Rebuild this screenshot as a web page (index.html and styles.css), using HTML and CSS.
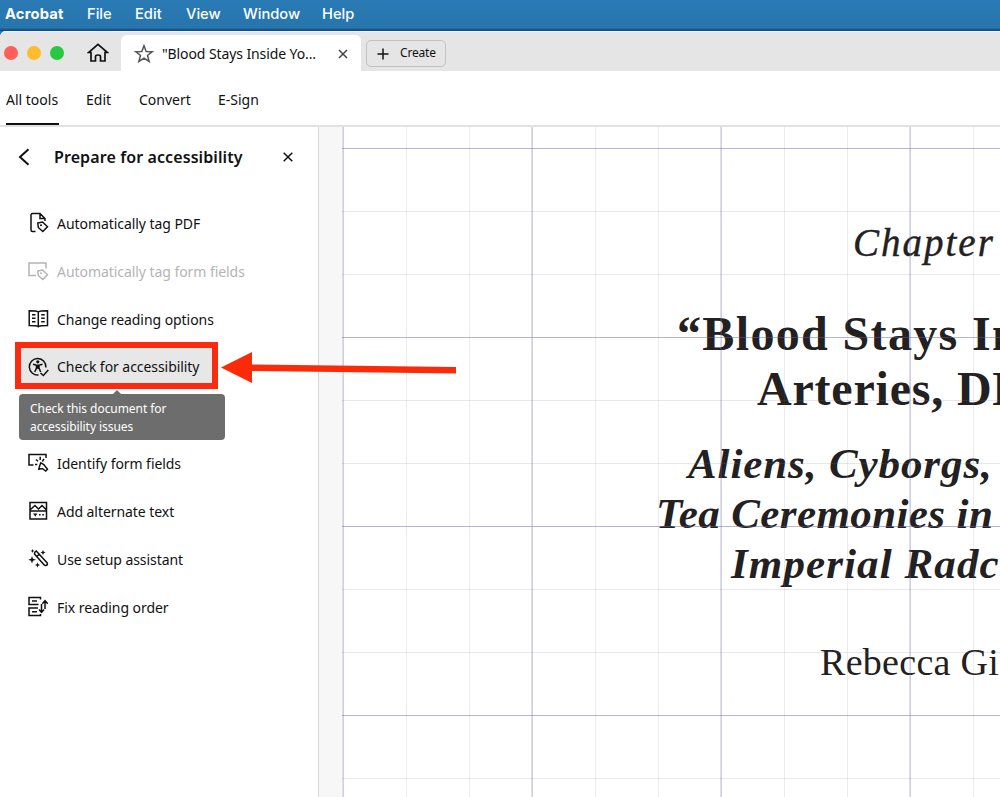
FILE: index.html
```html
<!DOCTYPE html>
<html lang="en">
<head>
  <meta charset="UTF-8">
  <title>Acrobat</title>
  <link rel="stylesheet" href="styles.css">
</head>
<body>

  <nav class="menubar">
    <b class="m-app">Acrobat</b>
    <span class="m-file">File</span>
    <span class="m-edit">Edit</span>
    <span class="m-view">View</span>
    <span class="m-window">Window</span>
    <span class="m-help">Help</span>
  </nav>

  <div class="window">
    <header class="tabbar">
      <div class="lights"><i class="red"></i><i class="yellow"></i><i class="green"></i></div>
      <svg class="home" width="22" height="20" viewBox="0 0 22 20"><path d="M4 9.500H1.500L11 1.300 20.500 9.500H18V18H13.500V13.500Q13.500 12 11 12T8.500 13.500V18H4Z"/></svg>
      <div class="tab">
        <svg class="star" width="20" height="20" viewBox="0 0 20 20"><path d="M10 1.700 12.200 7.400 18.300 7.700 13.500 11.500 15.200 17.500 10 14.100 4.800 17.500 6.500 11.500 1.700 7.700 7.800 7.400Z"/></svg>
        <span class="tab-title">"Blood Stays Inside Yo...</span>
        <svg class="tab-close" width="10" height="10" viewBox="0 0 10 10"><path d="M1 1l8 8M9 1 1 9"/></svg>
      </div>
      <button class="create">
        <svg width="12" height="12" viewBox="0 0 12 12"><path d="M6 .5v11M.5 6h11"/></svg>
        <span>Create</span>
      </button>
    </header>

    <div class="toolbar">
      <span class="t-all active">All tools</span>
      <span class="t-edit">Edit</span>
      <span class="t-convert">Convert</span>
      <span class="t-sign">E-Sign</span>
    </div>

    <div class="main">
      <aside class="panel">
        <div class="panel-head">
          <svg width="12" height="18" viewBox="0 0 12 18"><path d="M10.500 1.300 2 9l8.500 7.700"/></svg>
          <h1>Prepare for accessibility</h1>
          <svg class="panel-close" width="10" height="10" viewBox="0 0 10 10"><path d="M.7.7l8.600 8.600M9.300.7.7 9.300"/></svg>
        </div>

        <ul class="tools">
          <li>
            <svg width="22" height="22" viewBox="0 0 22 22"><path d="M7.500 19.500H4.500a1.500 1.500 0 0 1-1.500-1.500V3a1.500 1.500 0 0 1 1.500-1.500H12L17 6.500V9M12 1.500V6.500H17M9.800 11 14.500 10 19.500 14.800 14.800 19.500 10.300 15.500Z"/><circle class="dot" cx="13" cy="13.300" r="1"/></svg>
            <span>Automatically tag PDF</span>
          </li>
          <li class="disabled">
            <svg width="22" height="22" viewBox="0 0 22 22"><path d="M8 15.500H1V3H18V8.500M9.800 11 14.500 10 19.500 14.800 14.800 19.500 10.300 15.500Z"/><circle class="dot" cx="13" cy="13.300" r="1"/></svg>
            <span>Automatically tag form fields</span>
          </li>
          <li>
            <svg width="22" height="22" viewBox="0 0 22 22"><path d="M10.300 4C9 3 7 2.800 1.200 2.800V17.500C7 17.500 9 17.600 10.300 18.800 11.600 17.600 13.600 17.500 19.500 17.500V2.800C13.600 2.800 11.600 3 10.300 4ZM10.300 4V18.500M4 6.700H7.500M4 10.200H7.500M4 13.700H7.500M13.200 6.700H16.700M13.200 10.200H16.700M13.200 13.700H16.700"/></svg>
            <span>Change reading options</span>
          </li>
          <li class="selected">
            <svg width="22" height="22" viewBox="0 0 22 22"><path d="M10.500 19A8.300 8.300 0 1 1 17.900 11.500M12.500 17l2.800 2.500 5-5.500M5 8.300 8.500 9.300H11L14.500 8.300M8.500 9.300V12L6.700 16M11 9.300V12L12.700 16M8.500 12H11"/><circle class="dot" cx="9.800" cy="5.800" r="1.600"/><path class="dot" d="M8.500 9H11V12.500H8.500Z"/></svg>
            <span>Check for accessibility</span>
            <div class="tooltip">Check this document for<br>accessibility issues</div>
          </li>
          <li class="blank"></li>
          <li>
            <svg width="22" height="22" viewBox="0 0 22 22"><path d="M5.500 13H1V2.500H18V6M8 7.500 10 9.200M12.200 4.800V8M7 12.500H9.300M16 6.800 14.300 9.500M12.800 10.800 15.800 12.500 19.500 17.200 17.700 19 14.300 16.500 10.800 17.300Q11.500 14 12.800 10.800Z"/></svg>
            <span>Identify form fields</span>
          </li>
          <li>
            <svg width="22" height="22" viewBox="0 0 22 22"><path d="M2 2.500H18.500V19H2ZM2 11H18.500M2.500 9.500 7 5.500 10.500 9 14 5.500 18 9.500"/><path class="dot" d="M5 13.500H9.500L7.300 16.500ZM11 14h1.600v1.600H11ZM14.300 14h1.600v1.600h-1.600Z"/></svg>
            <span>Add alternate text</span>
          </li>
          <li>
            <svg width="22" height="22" viewBox="0 0 22 22"><path d="M6.800 4.300 8.300 3 19 14.700Q20 16.500 18.500 17.300 17 18 16 16.700L6.500 6ZM9 8.200 11.500 6"/><path class="dot" d="M4 8 5 10.800 8 11.700 5 12.700 4 15.500 3 12.700.3 11.700 3 10.800ZM15 2l.8 1.700 1.700.8-1.700.8L15 7l-.8-1.700-1.700-.8 1.700-.8ZM9.500 14.500l.8 1.800 1.800.7-1.800.7-.8 1.800-.8-1.800-1.800-.7 1.800-.7ZM4.500 1l.6 1.400 1.400.6-1.400.6L4.500 5l-.6-1.400L2.500 3l1.400-.6Z"/></svg>
            <span>Use setup assistant</span>
          </li>
          <li>
            <svg width="22" height="22" viewBox="0 0 22 22"><path d="M12.500 3.500V1.500H1V8.500H10.500M4 5H9M10 12H1V19.500H12.500V18M4 15.700H9M17 13V5M14.300 7.700 17 4.700 19.700 7.700M13.500 8V16M11 13.500 13.500 16.300 16 13.500"/></svg>
            <span>Fix reading order</span>
          </li>
        </ul>

        <svg class="arrow" width="240" height="36" viewBox="0 0 240 36"><path d="M1 16.500 32 1V13.500L236 16V22.500L32 20V32Z"/></svg>
      </aside>

      <div class="gutter"></div>

      <article class="page">
        <p class="chapter">Chapter</p>
        <h2 class="title-1">“Blood Stays In</h2>
        <h2 class="title-2">Arteries, DN</h2>
        <h3 class="sub-1">Aliens, Cyborgs,</h3>
        <h3 class="sub-2">Tea Ceremonies in</h3>
        <h3 class="sub-3">Imperial Radc</h3>
        <p class="author">Rebecca Gil</p>
      </article>
    </div>
  </div>

</body>
</html>
```

FILE: styles.css
```css
* {
  box-sizing: border-box;
  margin: 0;
  padding: 0;
}

body {
  height: 797px;
  overflow: hidden;
  background: #2777b0;
  font-family: "Noto Sans", "Open Sans", sans-serif;
  color: #111;
}

svg {
  fill: none;
  stroke: #111;
  stroke-width: 1.5;
  flex: none;
}

.menubar {
  display: flex;
  height: 31px;
  line-height: 28px;
  padding-left: 5px;
  background: linear-gradient(#2a7ab5, #2675ad 90%, #164c85 97%);
  color: #fff;
  font-family: Inter, sans-serif;
  font-size: 14.7px;
  font-weight: 500;
  white-space: nowrap;
}

.menubar b {
  font-weight: 700;
  letter-spacing: 0.2px;
}

.m-app { width: 82px; }
.m-file { width: 48px; }
.m-edit { width: 51px; }
.m-view { width: 57px; }
.m-window { width: 79px; }

.window {
  height: 766px;
  background: #fff;
  border-top-left-radius: 6px;
  overflow: hidden;
}

.tabbar {
  display: flex;
  height: 40px;
  background: #e5e5e5;
  border-top: 1px solid #f2f2f2;
}

.lights {
  display: flex;
  gap: 9px;
  width: 87px;
  padding: 14px 0 0 4px;
}

.lights i {
  width: 14px;
  height: 14px;
  border-radius: 50%;
}

.red { background: #ff5f58; }
.yellow { background: #fdbc2e; }
.green { background: #28c840; }

.home {
  margin: 11px 12px 0 0;
  stroke-width: 1.7;
}

.tab {
  display: flex;
  align-items: center;
  width: 240px;
  height: 37px;
  margin-top: 3px;
  padding-left: 13px;
  background: #fff;
  border-radius: 6px 6px 0 0;
}

.star { stroke: #555; }

.tab-title {
  width: 176px;
  margin-left: 8px;
  font-size: 14px;
  letter-spacing: -0.1px;
  white-space: nowrap;
}

.tab-close { stroke: #444; }

.create {
  display: flex;
  align-items: center;
  gap: 11px;
  width: 80px;
  height: 27px;
  margin: 8px 0 0 5px;
  padding-left: 10px;
  background: transparent;
  border: 1px solid #c2c2c2;
  border-radius: 5px;
  font: 12px "Noto Sans", sans-serif;
  letter-spacing: -0.2px;
  color: #111;
}

.create span { padding-bottom: 2px; }

.toolbar {
  display: flex;
  height: 56px;
  padding-left: 6px;
  border-bottom: 2px solid #e2e2e2;
  font-size: 14px;
  line-height: 57px;
  white-space: nowrap;
}

.toolbar span { height: 54px; }
.t-all { width: 53px; margin-right: 27px; }
.t-edit { width: 53px; }
.t-convert { width: 79px; }
.active { border-bottom: 2px solid #111; }

.main {
  display: flex;
  height: 670px;
}

.panel {
  position: relative;
  width: 318px;
  flex: none;
}

.panel-head {
  display: flex;
  align-items: center;
  height: 60px;
  padding-left: 18px;
}

.panel-head svg { stroke-width: 2; }

.panel-head h1 {
  width: 229px;
  margin-left: 24px;
  font-size: 16px;
  font-weight: 600;
  letter-spacing: 0.1px;
  white-space: nowrap;
}

.panel-head .panel-close { stroke-width: 1.5; }

.tools {
  list-style: none;
  padding: 12px 0 0 20px;
}

.tools li {
  position: relative;
  display: flex;
  align-items: center;
  gap: 7px;
  width: 193px;
  height: 48px;
  padding-left: 8px;
  font-size: 14px;
  letter-spacing: -0.06px;
  white-space: nowrap;
}

.tools .dot {
  fill: #111;
  stroke: none;
}

.tools .disabled { color: #b4b4b4; }
.disabled svg { stroke: #b4b4b4; }
.tools .disabled .dot { fill: #b4b4b4; }

.tools .selected {
  width: 203px;
  height: 47px;
  margin: -1px 0 2px -5px;
  padding: 2px 0 0 7px;
  border: 6px solid #fb2b10;
  background: #e7e7e7;
}

.tools .tooltip {
  position: absolute;
  left: -2px;
  top: 46px;
  width: 206px;
  height: 46px;
  padding: 6px 11px;
  background: #6d6d6d;
  border-radius: 4px;
  color: #fff;
  font-size: 12px;
  line-height: 18px;
}

.tooltip::before {
  content: "";
  position: absolute;
  left: 93px;
  top: -4px;
  border: 5px solid transparent;
  border-top: 0;
  border-bottom-color: #6d6d6d;
}

.arrow {
  position: absolute;
  left: 220px;
  top: 224px;
  z-index: 2;
}

.arrow path {
  fill: #fb2b0a;
  stroke: none;
}

.gutter {
  width: 24px;
  flex: none;
  background: #f7f7f8;
  border-left: 1px solid #d8d8d8;
}

.page {
  position: relative;
  flex: 1;
  overflow: hidden;
  font-family: "Liberation Serif", serif;
  color: #222021;
  white-space: nowrap;
}

/* ruler grid lies over the text */
.page::after {
  content: "";
  position: absolute;
  inset: 0;
  background:
    linear-gradient(90deg, rgba(110, 105, 170, 0.22) 2px, transparent 2px) 0 0 / 189px 189px,
    linear-gradient(rgba(95, 90, 150, 0.35) 1px, transparent 1px) 0 21px / 189px 189px,
    linear-gradient(90deg, rgba(120, 120, 150, 0.14) 1px, transparent 1px) 1px 0 / 63px 63px,
    linear-gradient(rgba(120, 120, 150, 0.18) 1px, transparent 1px) 0 21px / 63px 63px;
}

.chapter {
  margin: 92px 0 0 511px;
  font-size: 39px;
  line-height: 48px;
  font-style: italic;
  letter-spacing: 2px;
  -webkit-text-stroke: 0.4px #222021;
}

.title-1, .title-2 {
  font-size: 48px;
  line-height: 55px;
}

.title-1 {
  margin: 39px 0 0 335px;
  letter-spacing: 1.350px;
}

.title-2 {
  margin-left: 415px;
  letter-spacing: 0.800px;
}

.sub-1, .sub-2, .sub-3 {
  font-size: 43px;
  line-height: 50px;
  font-style: italic;
}

.sub-1 {
  margin: 23px 0 0 346px;
  letter-spacing: 0.900px;
}

.sub-2 {
  margin-left: 314px;
  letter-spacing: 0.400px;
}

.sub-3 {
  margin-left: 389px;
  letter-spacing: 1.100px;
}

.author {
  margin: 49px 0 0 478px;
  font-size: 38px;
  line-height: 48px;
  letter-spacing: 0.300px;
}
```
